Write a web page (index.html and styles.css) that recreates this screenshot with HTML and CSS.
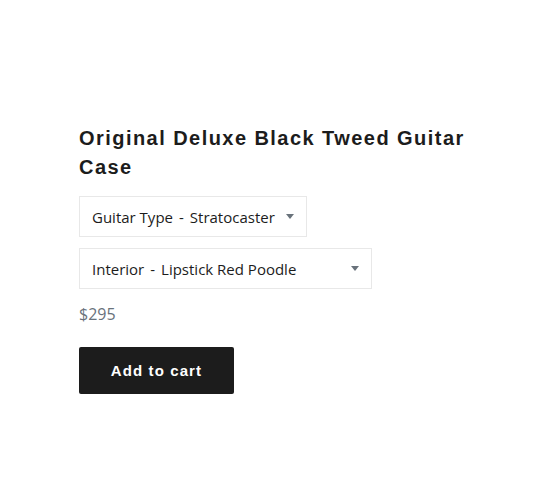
FILE: index.html
```html
<!DOCTYPE html>
<html>
<head>
<meta charset="utf-8">
<link rel="stylesheet" href="styles.css">
</head>
<body>
<div class="product">
  <h1 class="title">Original Deluxe Black Tweed Guitar Case</h1>
  <div class="select select-type">
    <span class="label">Guitar Type</span><span class="sep">-</span><span class="value">Stratocaster</span>
    <span class="caret"></span>
  </div>
  <div class="select select-interior">
    <span class="label">Interior</span><span class="sep">-</span><span class="value">Lipstick Red Poodle</span>
    <span class="caret"></span>
  </div>
  <div class="price">$295</div>
  <button class="cart">Add to cart</button>
</div>
</body>
</html>
```
FILE: styles.css
```css
html, body {
  margin: 0;
  padding: 0;
  background: #ffffff;
}
.product {
  padding: 124px 0 0 79px;
  width: 400px;
  display: flex;
  flex-direction: column;
  align-items: flex-start;
}
.title {
  margin: 0;
  font-family: "Liberation Sans", Arial, sans-serif;
  font-weight: 700;
  font-size: 20px;
  line-height: 29px;
  letter-spacing: 1.45px;
  color: #1c1c1c;
}
.select {
  margin-top: 14px;
  box-sizing: border-box;
  height: 41px;
  border: 1px solid #e8e8e8;
  display: flex;
  align-items: center;
  padding: 0 12px;
  font-family: "Open Sans", sans-serif;
  font-size: 15px;
  color: #1c1c1c;
}
.select-type { width: 228px; }
.select-interior { width: 293px; margin-top: 11px; }
.sep { margin: 0 6px; }
.caret {
  margin-left: auto;
  width: 0;
  height: 0;
  border-left: 4px solid transparent;
  border-right: 4px solid transparent;
  border-top: 5px solid #69727b;
}
.price {
  margin-top: 13px;
  font-family: "Open Sans", sans-serif;
  font-size: 16px;
  line-height: 24px;
  color: #69727b;
}
.cart {
  margin-top: 21px;
  width: 155px;
  height: 47px;
  border: none;
  border-radius: 2px;
  background: #1c1c1c;
  color: #ffffff;
  font-family: "Liberation Sans", Arial, sans-serif;
  font-weight: 700;
  font-size: 15px;
  letter-spacing: 1.1px;
  padding: 0;
}
```
